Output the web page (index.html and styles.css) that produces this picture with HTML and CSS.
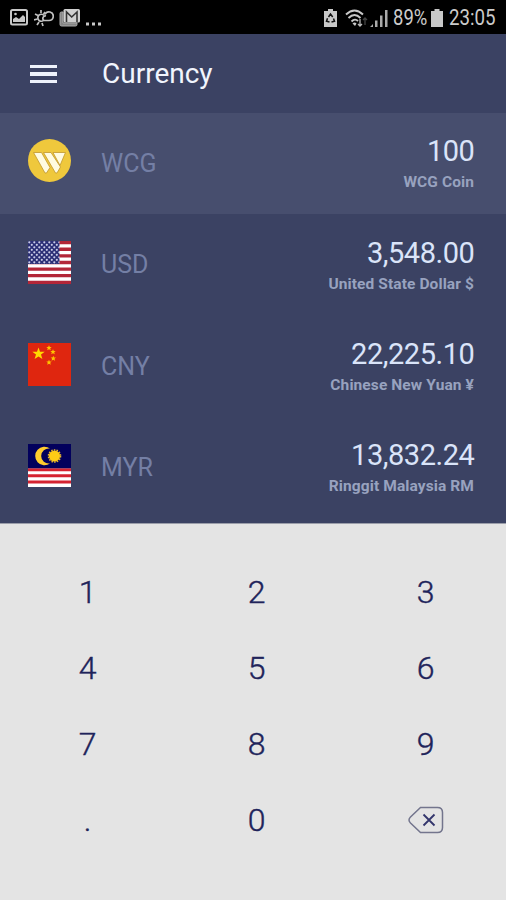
FILE: index.html
```html
<!DOCTYPE html>
<html lang="en">
<head>
<meta charset="utf-8">
<title>Currency</title>
<link rel="stylesheet" href="styles.css">
</head>
<body>
<div class="status">
  <div class="status-left">
    <svg width="18" height="17" viewBox="0 0 18 17"><rect x="1" y="1" width="16" height="14.500" rx="1.500" fill="none" stroke="#c8c8c8" stroke-width="2"/><path d="M3 13v-3l3-2 3 2 4-4 2 2v5z" fill="#c8c8c8"/><circle cx="5.500" cy="5" r="1.300" fill="#c8c8c8"/></svg>
    <svg width="20" height="18" viewBox="0 0 20 18"><g fill="none" stroke="#c0c0c0" stroke-width="1.700"><path d="M10 11a3.500 3.500 0 1 1 0-4.500"/><path d="M7 1v3M1 5l3 1.500M0 11l3.500-1M3 16l2-3M9 17l-1-3M11 3L9.500 5.500"/><path d="M10 11.500h5a4.300 4.300 0 1 0-4-6M10 11.500a2.500 2.500 0 0 1 2-4.500"/></g></svg>
    <svg class="mail" width="22" height="19" viewBox="0 0 22 19"><path d="M4 4H2.500A1.500 1.500 0 0 0 1 5.500v11A1.500 1.500 0 0 0 2.500 18h14a1.500 1.500 0 0 0 1.500-1.500V15H4z" fill="#858585" stroke="#aaa"/><rect x="4.500" y="1" width="16.500" height="13.500" rx="1.500" fill="#d0d0d0"/><path d="M7.500 14V4l5.200 5L18 4v10" fill="none" stroke="#333" stroke-width="1.600"/></svg>
    <svg class="more" width="15" height="4" viewBox="0 0 15 4"><path d="M0 .5h3v3H0zM6 .5h3v3H6zM12 .5h3v3h-3z" fill="#c8c8c8"/></svg>
  </div>
  <div class="status-right">
    <svg class="saver" width="13" height="18" viewBox="0 0 13 18"><path d="M4 0h5v2h4v16H0V2h4z" fill="#c8c8c8"/><path d="M4.500 8L6.500 5l2.200 3M9.500 9.500l1 2.800-3 .7M5.500 13l-3-.7 1-3" fill="none" stroke="#111" stroke-width="1.500"/></svg>
    <svg class="wifi" width="23" height="18" viewBox="0 0 23 18"><g fill="none" stroke="#c8c8c8" stroke-width="1.900"><path d="M1 5.500q8.500-8 17 0M3.500 9q6-6 12 0M6.500 12.500q3.500-3.500 6.500-.5"/></g><path d="M7.500 14.500q2.200-1.800 4 0L10 17z" fill="#c8c8c8"/><path d="M15 10v7m-2-2l2 2 2-2" stroke="#bbb" stroke-width="1.300" fill="none"/><path d="M20 16V9m-2 2l2-2 2 2" stroke="#444" stroke-width="1.300" fill="none"/></svg>
    <svg class="signal" width="18" height="18" viewBox="0 0 18 18"><path d="M0 18l3-3v3zM5 11.500h2.500V18H5zM10 6.500h2.500V18H10zM15 1h2.500v17H15z" fill="#aaa"/></svg>
    <span class="pct">89%</span>
    <svg class="batt" width="12" height="18" viewBox="0 0 12 18"><path d="M3.500 0h5v2H12v16H0V2h3.500z" fill="#c8c8c8"/></svg>
    <span class="clock">23:05</span>
  </div>
</div>

<header class="bar">
  <div class="menu"><i></i><i></i><i></i></div>
  <h1>Currency</h1>
</header>

<main class="rates">
  <section class="rate active">
    <svg class="flag" viewBox="0 0 43 43"><circle cx="21.500" cy="21.500" r="21.500" fill="#efc83c"/><g fill="#fffbe0" stroke="#c0972b" stroke-width=".8" stroke-linejoin="round"><path d="M5.500 13.500H13.500L22 28.500 18.500 34H17z"/><path d="M15.500 13.500H23L32.500 28 29 34H27.500z"/><path d="M25 13.500H37.500L32 26.500z"/></g></svg>
    <span class="code">WCG</span>
    <div class="amount"><b>100</b><small>WCG Coin</small></div>
  </section>
  <section class="rate">
    <svg class="flag" viewBox="0 0 43 43"><defs><pattern id="stars" width="5" height="5" patternUnits="userSpaceOnUse"><rect width="5" height="5" fill="#2a2e76"/><circle cx="1.300" cy="1.300" r="1.100" fill="#c9cbe6"/><circle cx="3.800" cy="3.800" r="1.100" fill="#c9cbe6"/></pattern></defs><path fill="#fff" d="M0 0h43v43H0z"/><path d="M0 1.650h43M0 8.250h43M0 14.850h43M0 21.500h43M0 28.100h43M0 34.700h43M0 41.350h43" stroke="#b32638" stroke-width="3.300"/><path d="M0 0h31.500v23H0z" fill="url(#stars)"/></svg>
    <span class="code">USD</span>
    <div class="amount"><b>3,548.00</b><small>United State Dollar $</small></div>
  </section>
  <section class="rate">
    <svg class="flag" viewBox="0 0 43 43"><path fill="#df260f" d="M0 0h43v43H0z"/><path fill="#ffda00" d="M10.500 4.500l1.500 4.300h4.700L13 11.600l1.400 4.500-3.900-2.700-3.900 2.700L8 11.600 4.300 8.800H9z"/><g fill="#ffc400"><path id="st" d="M21 2.300l.8 1.700 1.900.1-1.500 1.200.6 1.900-1.800-1-1.800 1 .6-1.900-1.500-1.200 1.900-.1z"/><use href="#st" x="4" y="4"/><use href="#st" x="4.300" y="10.500"/><use href="#st" x="0" y="14.500"/></g></svg>
    <span class="code">CNY</span>
    <div class="amount"><b>22,225.10</b><small>Chinese New Yuan ¥</small></div>
  </section>
  <section class="rate">
    <svg class="flag" viewBox="0 0 43 43"><path fill="#fff" d="M0 0h43v43H0z"/><path d="M0 25.700h43M0 31.850h43M0 38h43" stroke="#d52331" stroke-width="3"/><path fill="#02005c" d="M0 0h43v24.200H0z"/><path d="M22 4.500A9.300 9.300 0 1 0 22 19.500A7.600 7.600 0 1 1 22 4.500z" fill="#ffcc2d"/><circle cx="26.500" cy="12" r="5.600" fill="#ffcc16"/><circle cx="26.500" cy="12" r="6" fill="none" stroke="#e8b52c" stroke-width="1.600" stroke-dasharray="1.500 1.190"/></svg>
    <span class="code">MYR</span>
    <div class="amount"><b>13,832.24</b><small>Ringgit Malaysia RM</small></div>
  </section>
</main>

<div class="keypad">
  <span>1</span><span>2</span><span>3</span>
  <span>4</span><span>5</span><span>6</span>
  <span>7</span><span>8</span><span>9</span>
  <span>.</span><span>0</span>
  <span class="del"><svg width="36" height="28" viewBox="0 0 36 28"><path d="M12.500 1.500H29.500Q34.500 1.500 34.500 6.500V21.500Q34.500 26.500 29.500 26.500H12.500L2.500 17Q-.5 14 2.500 11z" fill="none" stroke="#73758d" stroke-width="1.500"/><path d="M15.500 8.500L26.500 19.500M26.500 8.500L15.500 19.500" stroke="#33356c" stroke-width="1.800"/></svg></span>
</div>
</body>
</html>
```

FILE: styles.css
```css
* { box-sizing: border-box; }
body {
  margin: 0;
  width: 506px;
  height: 900px;
  display: flex;
  flex-direction: column;
  overflow: hidden;
  background: #e4e4e4;
  font-family: Roboto, "Liberation Sans", sans-serif;
}
svg { display: block; flex: none; }

.status {
  height: 34px;
  flex: none;
  display: flex;
  justify-content: space-between;
  padding: 1px 10px 0;
  background: #000;
  color: #cbcbcb;
}
.status-left, .status-right { display: flex; align-items: center; }
.status-left { gap: 6px; }
.mail { margin-left: -1px; }
.more { margin: 12px 0 0 -1px; }
.wifi { margin-left: 8px; }
.signal { margin-left: 2px; }
.pct, .clock { font-size: 22px; white-space: nowrap; transform-origin: left center; }
.pct { margin-left: 5px; width: 35px; transform: scaleX(0.84); }
.batt { margin-left: 3px; }
.clock { margin-left: 6px; width: 47px; transform: scaleX(0.85); }

.bar {
  height: 79px;
  flex: none;
  display: flex;
  align-items: center;
  padding: 1px 0 0 30px;
  background: #3b4263;
}
.menu { width: 27px; display: grid; gap: 4px; }
.menu i { height: 3.500px; background: #eef2fb; }
h1 { margin: 0 0 0 45px; font-size: 28px; font-weight: 400; line-height: 40px; color: #f1f5fd; }

.rates { height: 411px; flex: none; background: #3b4263; border-bottom: 1px solid #9b9eaa; }
.rate { height: 101.3px; display: flex; padding: 0 32px 0 28px; }
.active { background: #474e6e; }
.flag { width: 43px; height: 43px; margin-top: 27px; }
.active .flag { margin-top: 26px; }
.code { margin: 31px 0 0 30px; font-size: 25px; line-height: 40px; color: #747fa5; }
.amount { margin: 20.300px 0 0 auto; display: flex; flex-direction: column; align-items: flex-end; }
.amount b { font-size: 29px; letter-spacing: -0.45px; margin-right: -0.45px; font-weight: 400; line-height: 36px; color: #dae4f9; }
.amount small { font-size: 15.500px; letter-spacing: 0.1px; font-weight: 700; line-height: 18px; margin-top: 4px; color: #98a2bf; }

.keypad {
  display: grid;
  grid-template-columns: repeat(3, 169px);
  grid-auto-rows: 76px;
  padding: 30px 0 0 3px;
  place-items: center;
  font-size: 32px;
  font-weight: 300;
  color: #20235a;
  -webkit-text-stroke: 0.4px #20235a;
}
.del { margin-left: 1px; }
```
